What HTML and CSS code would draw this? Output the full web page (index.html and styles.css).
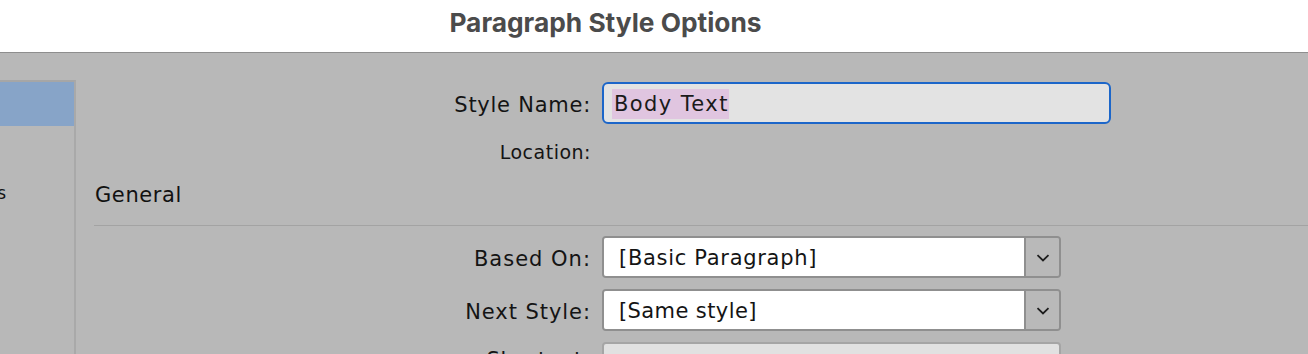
FILE: index.html
```html
<!DOCTYPE html>
<html>
<head>
<meta charset="utf-8">
<link rel="stylesheet" href="styles.css">
</head>
<body>
<div class="window">
  <header class="titlebar"><h1 class="title">Paragraph Style Options</h1></header>
  <div class="main">
    <nav class="sidebar">
      <div class="side-item selected"></div>
      <div class="side-item"><span>Basic Character Formats</span></div>
    </nav>
    <section class="content">
      <div class="row">
        <label class="label l-name">Style Name:</label>
        <div class="textfield"><span class="sel">Body Text</span></div>
      </div>
      <div class="row loc-row">
        <span class="label l-loc">Location:</span>
        <span></span>
      </div>
      <h2 class="section-title">General</h2>
      <div class="divider"></div>
      <div class="row">
        <label class="label l-based">Based On:</label>
        <div class="select"><span class="select-value v-based">[Basic Paragraph]</span><span class="select-btn"><svg width="14" height="8" viewBox="0 0 14 8"><path d="M1.5 1.2 L7 6.4 L12.5 1.2" fill="none" stroke="#1e1e1e" stroke-width="1.8"/></svg></span></div>
      </div>
      <div class="row">
        <label class="label l-next">Next Style:</label>
        <div class="select"><span class="select-value v-next">[Same style]</span><span class="select-btn"><svg width="14" height="8" viewBox="0 0 14 8"><path d="M1.5 1.2 L7 6.4 L12.5 1.2" fill="none" stroke="#1e1e1e" stroke-width="1.8"/></svg></span></div>
      </div>
      <div class="row last-row">
        <label class="label l-short">Shortcut:</label>
        <div class="field-disabled"></div>
      </div>
    </section>
  </div>
</div>
</body>
</html>
```
FILE: styles.css
```css
html, body {
  margin: 0;
  padding: 0;
}
body {
  width: 1308px;
  height: 354px;
  overflow: hidden;
  background: #b8b8b8;
  font-family: "DejaVu Sans", "Liberation Sans", sans-serif;
  color: #141414;
}
.window {
  display: flex;
  flex-direction: column;
  height: 354px;
}
.titlebar {
  height: 52px;
  background: #ffffff;
  border-bottom: 1px solid #8e8e8e;
  display: flex;
  align-items: center;
  justify-content: center;
  padding-right: 97px;
  flex: none;
}
.title {
  margin: 0;
  font-family: Inter, "Liberation Sans", sans-serif;
  font-weight: 700;
  font-size: 26.3px;
  color: #4b4b4b;
  padding-bottom: 7px;
}
.main {
  display: flex;
  flex: 1;
  min-height: 0;
}
.sidebar {
  width: 74px;
  margin-top: 27px;
  border-top: 2px solid #a6a6a6;
  border-right: 2px solid #a9a9a9;
  flex: none;
  display: flex;
  flex-direction: column;
}
.side-item {
  height: 44px;
  flex: none;
  display: flex;
  align-items: center;
  justify-content: flex-end;
  overflow: hidden;
  white-space: nowrap;
  font-size: 17px;
  padding-right: 68px;
}
.side-item.selected {
  background: #87a4c8;
  padding-right: 0;
}
.side-item:nth-child(2) {
  margin-top: 45px;
}
.content {
  flex: 1;
  padding: 29px 0 0 18px;
  display: flex;
  flex-direction: column;
}
.content > * {
  flex: none;
}
.row {
  display: grid;
  grid-template-columns: 497px auto;
  column-gap: 11px;
  align-items: center;
  margin-bottom: 11px;
}
.label {
  text-align: right;
  font-size: 21px;
  padding-top: 3px;
}
.l-name { letter-spacing: 0.75px; }
.l-loc { font-size: 19px; letter-spacing: 0.5px; padding-top: 0; }
.l-based { letter-spacing: 1px; }
.l-next { letter-spacing: 0.95px; }
.l-short { letter-spacing: 0.9px; }
.loc-row {
  margin-top: 5px;
  margin-bottom: 0;
  height: 24px;
}
.textfield {
  width: 509px;
  height: 42px;
  box-sizing: border-box;
  border: 2px solid #1c66c9;
  border-radius: 6px;
  background: #e3e3e3;
  display: flex;
  align-items: center;
  padding-left: 8px;
  padding-top: 2px;
}
.sel {
  background: #e0c5e0;
  font-size: 21px;
  letter-spacing: 1.4px;
  line-height: 30px;
  padding: 0 0 0 2px;
  color: #1a1a1a;
}
.section-title {
  margin: 17px 0 0 1px;
  font-weight: normal;
  font-size: 21px;
  letter-spacing: 0.6px;
  line-height: 28px;
  color: #111;
}
.divider {
  height: 1px;
  background: #a3a3a3;
  margin-top: 16px;
  margin-bottom: 10px;
}
.select {
  width: 459px;
  height: 42px;
  box-sizing: border-box;
  border: 2px solid #8f8f8f;
  border-radius: 4px;
  display: flex;
  overflow: hidden;
}
.select-value {
  flex: 1;
  background: #ffffff;
  display: flex;
  align-items: center;
  padding-left: 15px;
  padding-top: 2px;
  font-size: 21px;
  color: #141414;
}
.v-based { letter-spacing: 0.7px; }
.v-next { letter-spacing: 0.4px; }
.select-btn {
  width: 33px;
  border-left: 2px solid #8f8f8f;
  background: #b9b9b9;
  display: flex;
  align-items: center;
  justify-content: center;
}
.select-btn svg {
  display: block;
  margin-top: 1px;
}
.field-disabled {
  width: 459px;
  height: 42px;
  box-sizing: border-box;
  border: 2px solid #a5a5a5;
  border-radius: 4px;
  background: #e1e1e1;
}
.last-row {
  margin-bottom: 0;
  align-items: start;
}
.last-row .label {
  padding-top: 6px;
}
```
